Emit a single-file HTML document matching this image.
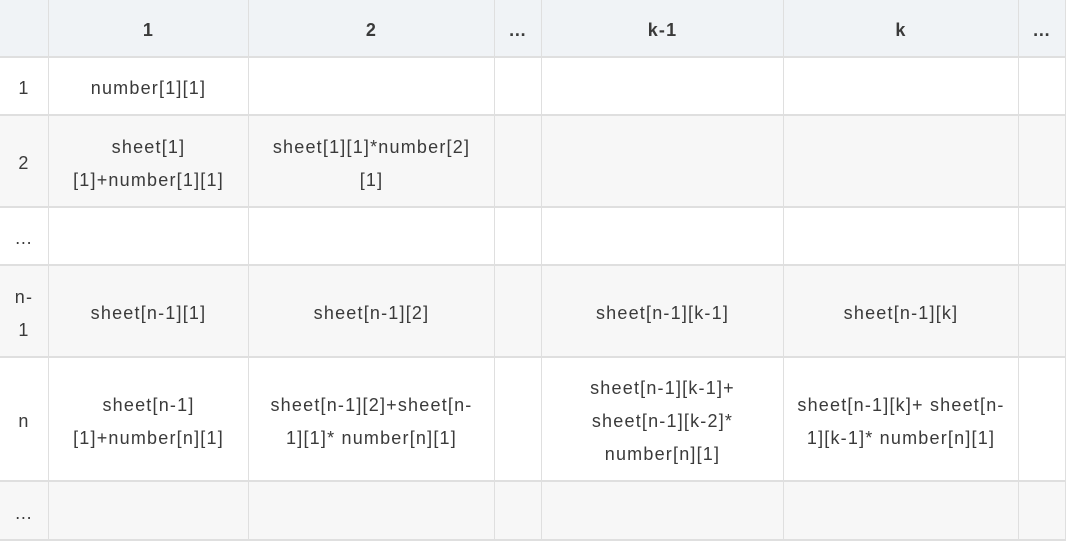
<!DOCTYPE html>
<html><head><meta charset="utf-8"><style>
html,body{margin:0;padding:0;background:#fff;}
body{width:1066px;height:541px;overflow:hidden;font-family:"Liberation Sans",Arial,sans-serif;color:#3a3a3a;font-size:18px;letter-spacing:1.2px;}
.c{position:absolute;display:flex;align-items:center;justify-content:center;text-align:center;line-height:33px;box-sizing:border-box;border-right:1px solid #dfdfdf;border-bottom:2px solid #dfdfdf;padding-top:5px;}
.h{background:#f0f3f6;font-weight:bold;}
.e{background:#f7f7f7;}
</style></head><body>
<div id="t"></div>
<script>
var xs=[0,49,249,495,542,784,1019,1066];
var ys=[0,58,116,208,266,358,482,541];
var data=[
["","1","2","…","k-1","k","…"],
["1","number[1][1]","","","","",""],
["2","sheet[1]<br>[1]+number[1][1]","sheet[1][1]*number[2]<br>[1]","","","",""],
["…","","","","","",""],
["n-<br>1","sheet[n-1][1]","sheet[n-1][2]","","sheet[n-1][k-1]","sheet[n-1][k]",""],
["n","sheet[n-1]<br>[1]+number[n][1]","sheet[n-1][2]+sheet[n-<br>1][1]* number[n][1]","","sheet[n-1][k-1]+<br>sheet[n-1][k-2]*<br>number[n][1]","sheet[n-1][k]+ sheet[n-<br>1][k-1]* number[n][1]",""],
["…","","","","","",""]];
var h="";
for(var r=0;r<7;r++)for(var c=0;c<7;c++){
var cls="c"+(r==0?" h":(r%2==0?" e":""));
var st="left:"+xs[c]+"px;top:"+ys[r]+"px;width:"+(xs[c+1]-xs[c])+"px;height:"+(ys[r+1]-ys[r])+"px;";
h+='<div class="'+cls+'" style="'+st+'">'+data[r][c]+'</div>';}
document.getElementById("t").innerHTML=h;
</script>
</body></html>
